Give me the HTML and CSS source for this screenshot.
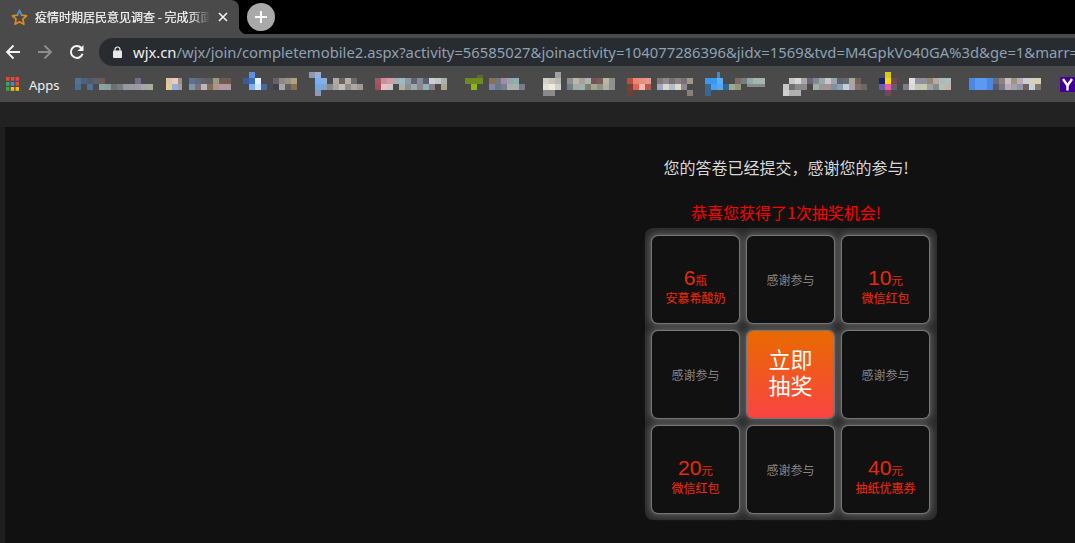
FILE: index.html
```html
<!DOCTYPE html>
<html lang="zh">
<head>
<meta charset="utf-8">
<title>疫情时期居民意见调查 - 完成页面</title>
<link rel="stylesheet" href="styles.css">
</head>
<body>
<div class="chrome">
  <div class="tabstrip">
    <div class="tab">
      <svg class="favicon" width="17" height="17" viewBox="0 0 17 17"><path d="M8.5 1.6l2.1 4.6 5 .6-3.7 3.4 1 5-4.4-2.5-4.4 2.5 1-5L1.4 6.800l5-.6z" fill="none" stroke="#e08a1e" stroke-width="1.700" stroke-linejoin="round"/><path d="M6.400 6.200L8.500 1.600l2.100 4.600" fill="none" stroke="#3f8fd8" stroke-width="1.700"/></svg>
      <span class="tab-title">疫情时期居民意见调查 - 完成页面</span>
      <svg class="tab-close" width="10" height="10" viewBox="0 0 10 10"><path d="M1 1l8 8M9 1l-8 8" stroke="#f2f2f2" stroke-width="1.600"/></svg>
    </div>
    <div class="newtab"><svg width="14" height="14" viewBox="0 0 14 14"><path d="M7 1v12M1 7h12" stroke="#fff" stroke-width="2"/></svg></div>
  </div>
  <div class="toolbar">
    <svg class="nav-icon" width="16" height="16" viewBox="0 0 16 16"><path d="M15 8H2M8.500 1.500L2 8l6.500 6.500" fill="none" stroke="#f4f4f4" stroke-width="1.800"/></svg>
    <svg class="nav-icon" width="16" height="16" viewBox="0 0 16 16"><path d="M1 8h13M7.500 1.500L14 8l-6.500 6.500" fill="none" stroke="#8e8e8e" stroke-width="1.800"/></svg>
    <svg class="nav-icon" width="16" height="16" viewBox="0 0 16 16"><path d="M13.600 9.800A6 6 0 1 1 12.200 3.700" fill="none" stroke="#f4f4f4" stroke-width="2"/><path d="M14.500 1v6h-6z" fill="#f4f4f4"/></svg>
    <div class="omnibox">
      <svg class="lock" width="9" height="12" viewBox="0 0 9 12"><path d="M2 5V3.500a2.500 2.500 0 0 1 5 0V5" fill="none" stroke="#e8e8e8" stroke-width="1.200"/><rect y="4.500" width="9" height="7.500" rx="1" fill="#e8e8e8"/></svg>
      <span class="url"><span class="host">wjx.cn</span>/wjx/join/completemobile2.aspx?activity=56585027&amp;joinactivity=104077286396&amp;jidx=1569&amp;tvd=M4GpkVo40GA%3d&amp;ge=1&amp;marr=1</span>
    </div>
  </div>
  <div class="bookmarks">
    <svg class="apps" width="13" height="14" viewBox="0 0 13 14">
      <rect width="3.500" height="3.800" fill="#e8453c"/><rect x="4.750" width="3.500" height="3.800" fill="#e8453c"/><rect x="9.500" width="3.500" height="3.800" fill="#e8453c"/>
      <rect y="5" width="3.500" height="3.800" fill="#34a853"/><rect x="4.750" y="5" width="3.500" height="3.800" fill="#4285f4"/><rect x="9.500" y="5" width="3.500" height="3.800" fill="#e8453c"/>
      <rect y="10" width="3.500" height="3.800" fill="#34a853"/><rect x="4.750" y="10" width="3.500" height="3.800" fill="#fbbc05"/><rect x="9.500" y="10" width="3.500" height="3.800" fill="#fbbc05"/>
    </svg>
    <span class="apps-label">Apps</span>
    <svg class="mosaic" width="1016" height="36" viewBox="59 66 1016 36" shape-rendering="crispEdges">
      <g>
        <rect x="75" y="78" width="6" height="6" fill="#4f7299"/><rect x="81" y="78" width="6" height="6" fill="#50607a"/><rect x="87" y="78" width="6" height="6" fill="#4f5a6b"/><rect x="93" y="78" width="6" height="6" fill="#5a5f68"/><rect x="99" y="78" width="6" height="6" fill="#6a5a50"/><rect x="135" y="78" width="6" height="6" fill="#6f7085"/>
        <rect x="75" y="84" width="6" height="6" fill="#4b6f93"/><rect x="87" y="84" width="6" height="6" fill="#4d7097"/><rect x="99" y="84" width="6" height="6" fill="#8aa2a5"/><rect x="105" y="84" width="6" height="6" fill="#85a09c"/><rect x="111" y="84" width="6" height="6" fill="#6b7070"/><rect x="117" y="84" width="6" height="6" fill="#757c80"/><rect x="123" y="84" width="6" height="6" fill="#8f9da0"/><rect x="129" y="84" width="6" height="6" fill="#999aa0"/><rect x="135" y="84" width="6" height="6" fill="#a09aa0"/><rect x="141" y="84" width="6" height="6" fill="#a0a8ae"/><rect x="147" y="84" width="6" height="6" fill="#a8ac98"/>
      </g>
      <g>
        <rect x="166" y="78" width="6" height="6" fill="#d9c9a0"/><rect x="172" y="78" width="6" height="6" fill="#f0c8c0"/><rect x="178" y="78" width="4" height="6" fill="#9a8f90"/><rect x="166" y="84" width="6" height="6" fill="#e0cf90"/><rect x="172" y="84" width="6" height="6" fill="#8fb0e0"/><rect x="178" y="84" width="4" height="6" fill="#a0a0a0"/>
        <rect x="189" y="78" width="6" height="6" fill="#5f7090"/><rect x="195" y="78" width="6" height="6" fill="#606a7a"/><rect x="201" y="78" width="6" height="6" fill="#605f6a"/><rect x="207" y="78" width="6" height="6" fill="#5f5f5f"/><rect x="213" y="78" width="6" height="6" fill="#9a9a80"/><rect x="219" y="78" width="12" height="6" fill="#705a50"/>
        <rect x="189" y="84" width="6" height="6" fill="#8094b0"/><rect x="195" y="84" width="6" height="6" fill="#7f6f70"/><rect x="201" y="84" width="6" height="6" fill="#b8b8b8"/><rect x="207" y="84" width="6" height="6" fill="#7f6f50"/><rect x="213" y="84" width="6" height="6" fill="#b09090"/><rect x="219" y="84" width="12" height="6" fill="#b09aa0"/>
      </g>
      <g>
        <rect x="243" y="78" width="6" height="6" fill="#3a5a9a"/><rect x="249" y="72" width="6" height="6" fill="#5f8fdf"/><rect x="249" y="78" width="6" height="6" fill="#3a70c0"/><rect x="255" y="78" width="6" height="6" fill="#e8f0ff"/><rect x="249" y="84" width="6" height="6" fill="#80b0f0"/><rect x="255" y="84" width="6" height="6" fill="#d0e0ff"/><rect x="261" y="84" width="6" height="6" fill="#4a6a9a"/>
        <rect x="273" y="78" width="6" height="6" fill="#6a5f6a"/><rect x="279" y="78" width="6" height="6" fill="#8a8a80"/><rect x="285" y="78" width="6" height="6" fill="#a09080"/><rect x="291" y="78" width="6" height="6" fill="#b0a080"/><rect x="273" y="84" width="6" height="6" fill="#404050"/><rect x="279" y="84" width="6" height="6" fill="#a0a8a8"/><rect x="285" y="84" width="6" height="6" fill="#605f60"/><rect x="291" y="84" width="6" height="6" fill="#8a7050"/>
      </g>
      <g>
        <rect x="309" y="72" width="6" height="6" fill="#8a9ab0"/><rect x="315" y="72" width="6" height="6" fill="#9ab0d0"/><rect x="315" y="78" width="6" height="6" fill="#70b0ff"/><rect x="321" y="78" width="6" height="6" fill="#8ab0d8"/><rect x="315" y="84" width="6" height="6" fill="#70a8f0"/><rect x="321" y="84" width="6" height="6" fill="#8aa0c0"/><rect x="315" y="90" width="6" height="6" fill="#8a9ab8"/>
        <rect x="333" y="78" width="6" height="6" fill="#b0a8a8"/><rect x="339" y="78" width="6" height="6" fill="#6a6460"/><rect x="345" y="78" width="6" height="6" fill="#b8b0a8"/><rect x="351" y="78" width="6" height="6" fill="#6a6a70"/><rect x="327" y="84" width="6" height="6" fill="#8a8a8a"/><rect x="333" y="84" width="6" height="6" fill="#a8a8a0"/><rect x="339" y="84" width="6" height="6" fill="#c0c0b8"/><rect x="345" y="84" width="6" height="6" fill="#909088"/><rect x="351" y="84" width="6" height="6" fill="#b0a8a0"/><rect x="357" y="84" width="6" height="6" fill="#a09a90"/>
      </g>
      <g>
        <rect x="375" y="78" width="6" height="6" fill="#a05a60"/><rect x="381" y="78" width="6" height="6" fill="#c8909a"/><rect x="387" y="78" width="6" height="6" fill="#d89aa0"/><rect x="393" y="78" width="6" height="6" fill="#a0b0b8"/><rect x="399" y="78" width="6" height="6" fill="#a0b8c0"/><rect x="405" y="78" width="6" height="6" fill="#8a9aa8"/><rect x="411" y="78" width="6" height="6" fill="#5f6478"/><rect x="417" y="78" width="6" height="6" fill="#8a8a90"/><rect x="423" y="78" width="6" height="6" fill="#585f70"/><rect x="429" y="78" width="6" height="6" fill="#c8d0d4"/><rect x="435" y="78" width="6" height="6" fill="#c0c8c8"/><rect x="441" y="78" width="6" height="6" fill="#b0b0b0"/>
        <rect x="375" y="84" width="6" height="6" fill="#a05060"/><rect x="381" y="84" width="6" height="6" fill="#e8c0c8"/><rect x="387" y="84" width="6" height="6" fill="#c8c8c8"/><rect x="399" y="84" width="6" height="6" fill="#b0b0a0"/><rect x="405" y="84" width="6" height="6" fill="#8a9090"/><rect x="411" y="84" width="6" height="6" fill="#a0a8a8"/><rect x="417" y="84" width="6" height="6" fill="#888888"/><rect x="423" y="84" width="6" height="6" fill="#90b0c0"/><rect x="429" y="84" width="6" height="6" fill="#8a8080"/><rect x="441" y="84" width="6" height="6" fill="#a8a890"/>
      </g>
      <g>
        <rect x="465" y="78" width="18" height="6" fill="#6f8a20"/><rect x="471" y="84" width="6" height="6" fill="#8ab818"/><rect x="477" y="75" width="6" height="3" fill="#5a6a30"/>
        <rect x="489" y="78" width="6" height="6" fill="#8a7050"/><rect x="495" y="78" width="6" height="6" fill="#707880"/><rect x="501" y="78" width="6" height="6" fill="#a88aa8"/><rect x="507" y="78" width="6" height="6" fill="#90a8a8"/><rect x="513" y="78" width="6" height="6" fill="#8ab0b0"/><rect x="489" y="84" width="6" height="6" fill="#7f88a8"/><rect x="495" y="84" width="6" height="6" fill="#68788a"/><rect x="501" y="84" width="6" height="6" fill="#7a7f90"/><rect x="507" y="84" width="6" height="6" fill="#a8b0a8"/><rect x="513" y="84" width="6" height="6" fill="#a8b0a8"/><rect x="519" y="84" width="6" height="6" fill="#7a7a90"/>
      </g>
      <g>
        <rect x="555" y="72" width="6" height="6" fill="#a0a0a0"/><rect x="543" y="78" width="6" height="6" fill="#d0d0c8"/><rect x="549" y="78" width="6" height="6" fill="#c8c4b8"/><rect x="555" y="78" width="6" height="6" fill="#b8b8b0"/><rect x="543" y="84" width="6" height="6" fill="#e0e0d8"/><rect x="549" y="84" width="6" height="6" fill="#f0ecd8"/><rect x="555" y="84" width="6" height="6" fill="#d0d0d0"/><rect x="543" y="90" width="12" height="6" fill="#8a8a8a"/>
        <rect x="567" y="78" width="6" height="6" fill="#8a9090"/><rect x="573" y="78" width="6" height="6" fill="#b8b8a8"/><rect x="579" y="78" width="6" height="6" fill="#a8a098"/><rect x="585" y="78" width="6" height="6" fill="#a8b8b0"/><rect x="591" y="78" width="6" height="6" fill="#7a5058"/><rect x="597" y="78" width="6" height="6" fill="#706058"/><rect x="603" y="78" width="6" height="6" fill="#b8b8a0"/><rect x="609" y="78" width="6" height="6" fill="#909090"/>
        <rect x="567" y="84" width="6" height="6" fill="#708088"/><rect x="573" y="84" width="6" height="6" fill="#a8a8a0"/><rect x="579" y="84" width="6" height="6" fill="#a0b0b0"/><rect x="585" y="84" width="6" height="6" fill="#7f7f70"/><rect x="591" y="84" width="6" height="6" fill="#a0a888"/><rect x="597" y="84" width="6" height="6" fill="#909088"/><rect x="603" y="84" width="6" height="6" fill="#b0b0a0"/><rect x="609" y="84" width="6" height="6" fill="#909090"/>
      </g>
      <g>
        <rect x="627" y="78" width="6" height="6" fill="#b85040"/><rect x="633" y="78" width="6" height="6" fill="#e88878"/><rect x="639" y="78" width="6" height="6" fill="#e89080"/><rect x="645" y="78" width="6" height="6" fill="#e89888"/><rect x="627" y="84" width="6" height="6" fill="#7a4038"/><rect x="633" y="84" width="6" height="6" fill="#e86050"/><rect x="639" y="84" width="6" height="6" fill="#f0b8b0"/><rect x="645" y="84" width="6" height="6" fill="#b85848"/><rect x="627" y="90" width="6" height="6" fill="#704038"/>
        <rect x="657" y="78" width="6" height="6" fill="#807878"/><rect x="663" y="78" width="6" height="6" fill="#908888"/><rect x="669" y="78" width="6" height="6" fill="#787070"/><rect x="675" y="78" width="6" height="6" fill="#888080"/><rect x="681" y="78" width="6" height="6" fill="#787078"/><rect x="687" y="78" width="6" height="6" fill="#a09888"/>
        <rect x="657" y="84" width="6" height="6" fill="#a0a8c0"/><rect x="663" y="84" width="6" height="6" fill="#d8d8d0"/><rect x="669" y="84" width="6" height="6" fill="#a8c0c8"/><rect x="675" y="84" width="6" height="6" fill="#e0d8c8"/><rect x="681" y="84" width="6" height="6" fill="#8a8a90"/><rect x="687" y="90" width="6" height="6" fill="#888078"/>
      </g>
      <g>
        <rect x="705" y="78" width="6" height="6" fill="#3a98f0"/><rect x="711" y="78" width="6" height="6" fill="#3a98f0"/><rect x="717" y="72" width="3" height="6" fill="#3a8ad8"/><rect x="717" y="78" width="6" height="6" fill="#58b0f8"/><rect x="705" y="84" width="6" height="6" fill="#386890"/><rect x="711" y="84" width="6" height="6" fill="#4aa0f0"/><rect x="717" y="84" width="6" height="6" fill="#58a8f0"/><rect x="723" y="84" width="6" height="6" fill="#306890"/><rect x="705" y="90" width="6" height="6" fill="#386890"/>
        <rect x="735" y="78" width="6" height="6" fill="#806868"/><rect x="741" y="78" width="6" height="6" fill="#708080"/><rect x="747" y="78" width="6" height="6" fill="#90a8a8"/><rect x="753" y="78" width="12" height="6" fill="#a0b8b0"/><rect x="729" y="84" width="6" height="6" fill="#a0a890"/><rect x="735" y="84" width="6" height="6" fill="#909878"/><rect x="747" y="84" width="18" height="3" fill="#8a8a88"/>
      </g>
      <g>
        <rect x="789" y="78" width="6" height="6" fill="#c8c8c8"/><rect x="795" y="78" width="6" height="6" fill="#d8d8d8"/><rect x="801" y="78" width="6" height="6" fill="#a8a8a8"/><rect x="783" y="84" width="6" height="6" fill="#c8c8c8"/><rect x="789" y="84" width="6" height="6" fill="#707070"/><rect x="795" y="84" width="12" height="6" fill="#8a8a8a"/><rect x="783" y="90" width="6" height="6" fill="#d0d0d0"/><rect x="789" y="90" width="12" height="6" fill="#b0b0b0"/>
        <rect x="807" y="78" width="6" height="6" fill="#686878"/><rect x="813" y="78" width="6" height="6" fill="#808890"/><rect x="819" y="78" width="6" height="6" fill="#98a8b0"/><rect x="825" y="78" width="6" height="6" fill="#c8c8c8"/><rect x="831" y="78" width="6" height="6" fill="#98a8a8"/><rect x="837" y="78" width="6" height="6" fill="#5f6470"/><rect x="843" y="78" width="6" height="6" fill="#686870"/><rect x="849" y="78" width="6" height="6" fill="#a8a898"/><rect x="855" y="78" width="6" height="6" fill="#706058"/>
        <rect x="813" y="84" width="6" height="6" fill="#a0b0a8"/><rect x="819" y="84" width="6" height="6" fill="#989890"/><rect x="825" y="84" width="6" height="6" fill="#a89098"/><rect x="831" y="84" width="6" height="6" fill="#8090a0"/><rect x="837" y="84" width="6" height="6" fill="#88a0b0"/><rect x="843" y="84" width="6" height="6" fill="#c0d0e0"/><rect x="849" y="84" width="6" height="6" fill="#b0a0a8"/><rect x="855" y="84" width="6" height="6" fill="#807070"/><rect x="861" y="84" width="6" height="6" fill="#706860"/>
      </g>
      <g>
        <rect x="885" y="72" width="6" height="6" fill="#d8c820"/><rect x="885" y="78" width="6" height="6" fill="#ffd800"/><rect x="879" y="78" width="6" height="6" fill="#182070"/><rect x="891" y="78" width="6" height="6" fill="#704850"/><rect x="879" y="84" width="6" height="6" fill="#6860a8"/><rect x="885" y="84" width="6" height="6" fill="#f058a8"/><rect x="891" y="84" width="6" height="6" fill="#606070"/><rect x="885" y="90" width="6" height="6" fill="#704858"/>
        <rect x="909" y="78" width="6" height="6" fill="#e0e0e0"/><rect x="915" y="78" width="6" height="6" fill="#9090a0"/><rect x="921" y="78" width="6" height="6" fill="#909098"/><rect x="927" y="78" width="6" height="6" fill="#908870"/><rect x="933" y="78" width="6" height="6" fill="#b8a8a0"/><rect x="939" y="78" width="6" height="6" fill="#b0b8b8"/><rect x="945" y="78" width="6" height="6" fill="#a8c0c0"/>
        <rect x="903" y="84" width="6" height="6" fill="#788088"/><rect x="909" y="84" width="6" height="6" fill="#e0d8d0"/><rect x="915" y="84" width="6" height="6" fill="#c0c8b8"/><rect x="921" y="84" width="6" height="6" fill="#c8c8b0"/><rect x="927" y="84" width="6" height="6" fill="#a0a0a8"/><rect x="933" y="84" width="6" height="6" fill="#809088"/><rect x="939" y="84" width="6" height="6" fill="#b0c0b8"/><rect x="945" y="84" width="6" height="6" fill="#c8b0a8"/>
      </g>
      <g>
        <rect x="969" y="78" width="6" height="12" fill="#4a88e8"/><rect x="975" y="78" width="12" height="12" fill="#5e98f0"/><rect x="987" y="78" width="6" height="12" fill="#4a88e0"/>
        <rect x="993" y="78" width="6" height="6" fill="#686c7a"/><rect x="999" y="78" width="6" height="6" fill="#908080"/><rect x="1005" y="78" width="6" height="6" fill="#c8c0c0"/><rect x="1011" y="78" width="6" height="6" fill="#989880"/><rect x="1017" y="78" width="6" height="6" fill="#c0a8b8"/><rect x="1023" y="78" width="6" height="6" fill="#c8d0d0"/><rect x="1029" y="78" width="12" height="6" fill="#d8d0b8"/>
        <rect x="993" y="84" width="6" height="6" fill="#585868"/><rect x="999" y="84" width="6" height="6" fill="#787880"/><rect x="1005" y="84" width="6" height="6" fill="#b8a8b8"/><rect x="1011" y="84" width="6" height="6" fill="#a0a0b0"/><rect x="1017" y="84" width="6" height="6" fill="#9098a8"/><rect x="1023" y="84" width="6" height="6" fill="#706060"/><rect x="1029" y="84" width="6" height="6" fill="#c8d0d8"/><rect x="1035" y="84" width="6" height="6" fill="#807868"/>
      </g>
      <rect x="1060" y="77" width="15" height="15" fill="#410093"/>
      <path d="M1063 79l4.500 6.500v5M1072 79l-4.500 6.500" fill="none" stroke="#fff" stroke-width="2.400" shape-rendering="auto"/>
    </svg>
  </div>
  <div class="chrome-gap"></div>
</div>
<main class="page">
  <div class="column">
    <p class="msg">您的答卷已经提交&#xFF0C;感谢您的参与!</p>
    <p class="msg msg-red">恭喜您获得了1次抽奖机会!</p>
    <div class="wheel">
      <div class="cell prize"><div><b>6</b><small>瓶</small></div><div class="prize-name">安慕希酸奶</div></div>
      <div class="cell thanks">感谢参与</div>
      <div class="cell prize"><div><b>10</b><small>元</small></div><div class="prize-name">微信红包</div></div>
      <div class="cell thanks">感谢参与</div>
      <div class="cell draw"><span>立即</span><span>抽奖</span></div>
      <div class="cell thanks">感谢参与</div>
      <div class="cell prize"><div><b>20</b><small>元</small></div><div class="prize-name">微信红包</div></div>
      <div class="cell thanks">感谢参与</div>
      <div class="cell prize"><div><b>40</b><small>元</small></div><div class="prize-name">抽纸优惠券</div></div>
    </div>
  </div>
</main>
</body>
</html>
```
FILE: styles.css
```css
* { box-sizing: border-box; }
html, body { margin: 0; height: 100%; overflow: hidden; }
body {
  display: flex;
  flex-direction: column;
  background: #111;
  font-family: "Noto Sans CJK SC", "Noto Sans", sans-serif;
}
.chrome { flex: none; }
.tabstrip {
  height: 34px;
  background: #000;
  display: flex;
  align-items: center;
}
.tab {
  width: 239px;
  height: 34px;
  padding: 0 11px;
  background: #4a4a4a;
  border-radius: 0 8px 0 0;
  display: flex;
  align-items: center;
  position: relative;
}
.tab::after {
  content: "";
  position: absolute;
  left: 100%;
  bottom: 0;
  width: 8px;
  height: 8px;
  background: radial-gradient(circle at 100% 0, transparent 8px, #4a4a4a 8.5px);
}
.favicon { flex: none; }
.tab-title {
  margin-left: 7px;
  width: 175px;
  flex: none;
  overflow: hidden;
  white-space: nowrap;
  font-size: 12px;
  line-height: 18px;
  color: #f6f6f6;
  -webkit-text-stroke: 0.2px #f6f6f6;
  -webkit-mask-image: linear-gradient(to right, #000 155px, transparent 175px);
  mask-image: linear-gradient(to right, #000 155px, transparent 175px);
}
.tab-close { margin-left: 8px; flex: none; }
.newtab {
  margin-left: 8px;
  width: 28px;
  height: 28px;
  border-radius: 50%;
  background: #a9a9a9;
  display: flex;
  align-items: center;
  justify-content: center;
}
.toolbar {
  height: 32px;
  background: #4a4a4a;
  display: flex;
  align-items: flex-end;
  padding-left: 5px;
}
.nav-icon { flex: none; margin: 0 16px 6px 0; }
.nav-icon + .nav-icon + .nav-icon { margin-right: 14px; }
.omnibox {
  flex: 1;
  min-width: 0;
  height: 28px;
  background: #282c30;
  border-radius: 14px 0 0 14px;
  display: flex;
  align-items: center;
  padding-left: 14px;
  overflow: hidden;
}
.lock { flex: none; margin-right: 11px; }
.url {
  white-space: nowrap;
  font-family: "Noto Sans", sans-serif;
  font-size: 14.8px;
  line-height: 20px;
  color: #8fa1b1;
}
.host { color: #f0f0f0; }
.bookmarks {
  height: 36px;
  background: #4a4a4a;
  display: flex;
  align-items: center;
  padding-left: 6px;
  overflow: hidden;
}
.apps { flex: none; margin-right: 10px; }
.apps-label {
  flex: none;
  width: 30px;
  font-family: "Noto Sans", sans-serif;
  font-size: 13px;
  line-height: 20px;
  padding-top: 1px;
  color: #f0f0f0;
}
.mosaic { flex: none; }
.chrome-gap { height: 25px; background: #222; }
.page {
  flex: 1;
  min-height: 0;
  border-left: 5px solid #1f1f1f;
  padding-left: 640px;
  background: #111;
}
.column { width: 292px; padding-top: 28px; }
.msg {
  margin: 0 10px 0 0;
  font-size: 16px;
  line-height: 24px;
  text-align: center;
  white-space: nowrap;
  color: #d8d8d8;
}
.msg-red { margin-top: 21px; margin-bottom: 4px; color: #f00; }
.wheel {
  display: grid;
  grid-template-columns: repeat(3, 87px);
  grid-auto-rows: 87px;
  gap: 8px;
  padding: 8px 8px 7px 7px;
  width: 292px;
  background: #2b2b2b;
  border-radius: 8px;
}
.cell {
  display: flex;
  flex-direction: column;
  align-items: center;
  justify-content: center;
  background: #111;
  border-radius: 6px;
  box-shadow: 0 0 1px 1px #7c7c7c, 0 0 6px 3px #5a5a5a;
  text-align: center;
}
.thanks { font-size: 12px; color: #858585; }
.prize { color: #e8290b; font-size: 14px; padding-top: 14px; }
.prize b { font-family: "Liberation Sans", sans-serif; font-weight: 400; font-size: 21px; line-height: 22px; }
.prize-name { font-size: 12px; line-height: 18px; -webkit-text-stroke: 0.1px #e8290b; }
.draw {
  font-size: 22px;
  line-height: 26px;
  padding-bottom: 7px;
  color: #fff;
  background: linear-gradient(#e86a00, #fa4444);
}
```
